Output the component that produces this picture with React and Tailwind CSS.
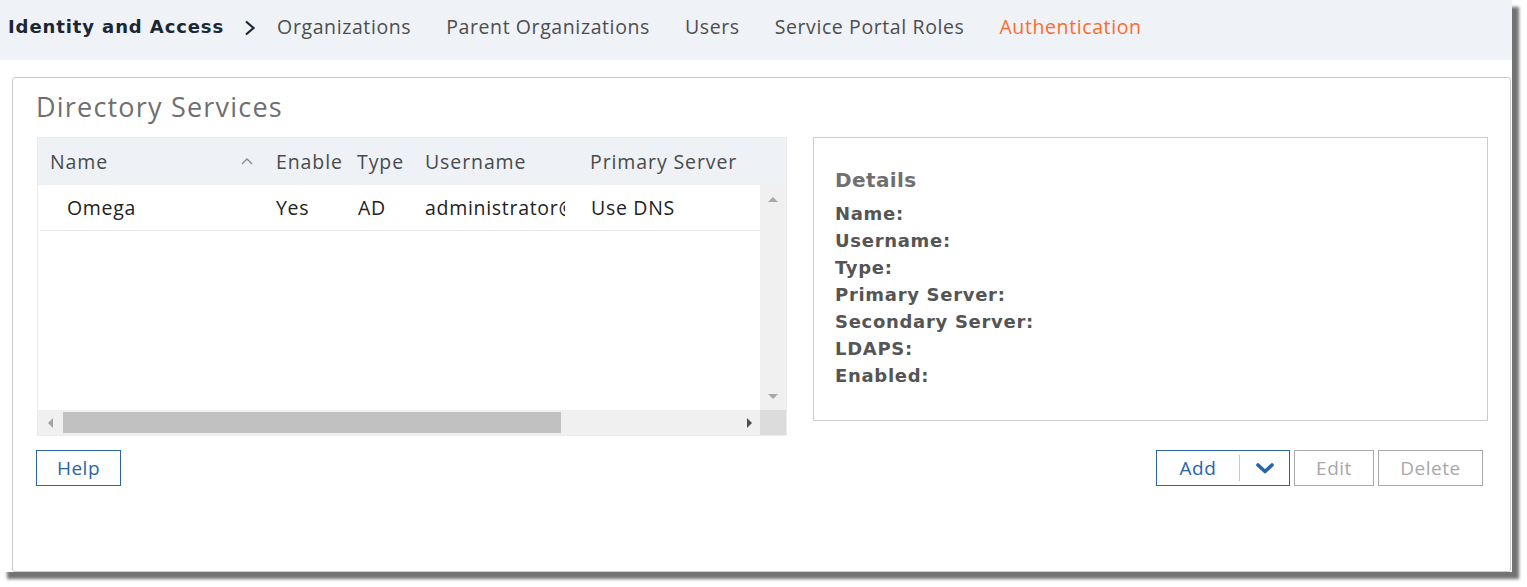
const tabs = ['Organizations', 'Parent Organizations', 'Users', 'Service Portal Roles']

const details = ['Name:', 'Username:', 'Type:', 'Primary Server:', 'Secondary Server:', 'LDAPS:', 'Enabled:']

const sans = "font-['Open_Sans',_'Noto_Sans',_sans-serif]"
const verdana = "font-['DejaVu_Sans',_'Liberation_Sans',_sans-serif]"

function Triangle({ dir, color }) {
  const pts = {
    up: '0,5 5,0 10,5',
    down: '0,0 10,0 5,5',
    left: '5,0 5,10 0,5',
    right: '0,0 0,10 5,5',
  }[dir]
  const vertical = dir === 'up' || dir === 'down'
  return (
    <svg width={vertical ? 10 : 5} height={vertical ? 5 : 10} viewBox={vertical ? '0 0 10 5' : '0 0 5 10'}>
      <polygon points={pts} fill={color} />
    </svg>
  )
}

export default function App() {
  return (
    <div className={`w-[1527px] h-[587px] bg-white ${sans}`}>
      <div className="w-[1512px] h-[572px] bg-white flex flex-col shadow-[7px_7px_3px_rgba(0,0,0,0.55)]">
        {/* top nav */}
        <div className="h-[60px] shrink-0 bg-[#eff3f7] flex items-center pl-[8px] pb-[7px]">
          <span className={`${verdana} font-bold text-[18px] text-[#1c2634] tracking-[0.9px]`}>Identity and Access</span>
          <svg width="12" height="16" viewBox="0 0 12 16" className="ml-[20px] mr-[21px] mt-[2px]">
            <polyline points="2,1.5 9.5,8 2,14.5" fill="none" stroke="#1c2634" strokeWidth="2.2" />
          </svg>
          <div className="flex items-center gap-[35px] text-[19.5px] tracking-[0.6px] text-[#4d4d4d]">
            {tabs.map(t => <span key={t}>{t}</span>)}
            <span className="text-[#ff6a2a]">Authentication</span>
          </div>
        </div>

        {/* card */}
        <div className="flex-1 mt-[17px] ml-[12px] mr-[1px] border border-[#cccccc] rounded-[3px] pl-[23px] pt-[11px]">
          <h1 className="text-[27px] tracking-[1.2px] text-[#6f6f6f] leading-[36px]">Directory Services</h1>

          <div className="flex mt-[12px] gap-[26px]">
            {/* table */}
            <div className="w-[750px] h-[299px] border border-[#ececec] flex flex-col ml-[1px]">
              <div className="h-[47px] bg-[#eef2f6] flex items-center text-[19.5px] tracking-[0.9px] text-[#4a4a4a]">
                <div className="w-[228px] pl-[12px] flex items-center justify-between pr-[13px]">
                  <span>Name</span>
                  <svg width="12" height="7" viewBox="0 0 12 7">
                    <polyline points="1,6 6,1 11,6" fill="none" stroke="#8a8a8a" strokeWidth="1.3" />
                  </svg>
                </div>
                <div className="w-[81px] pl-[10px]">Enable</div>
                <div className="w-[68px] pl-[10px]">Type</div>
                <div className="w-[165px] pl-[10px]">Username</div>
                <div className="pl-[10px] whitespace-nowrap">Primary Server</div>
              </div>
              <div className="flex-1 flex">
                <div className="w-[722px] pl-[2px]">
                  <div className="h-[46px] flex items-center text-[19.5px] tracking-[0.7px] text-[#222] border-b border-[#e8e8e8]">
                    <div className="w-[226px] pl-[27px]">Omega</div>
                    <div className="w-[81px] pl-[10px]">Yes</div>
                    <div className="w-[68px] pl-[11px]">AD</div>
                    <div className="w-[165px] pl-[10px]">
                      <div className="w-[140px] overflow-hidden whitespace-nowrap">administrator@</div>
                    </div>
                    <div className="pl-[11px]">Use DNS</div>
                  </div>
                </div>
                <div className="w-[26px] bg-[#f0f0f0] flex flex-col items-center justify-between pt-[12px] pb-[11px]">
                  <Triangle dir="up" color="#a8a8a8" />
                  <Triangle dir="down" color="#a8a8a8" />
                </div>
              </div>
              <div className="h-[25px] flex">
                <div className="w-[722px] bg-[#f0f0f0] flex items-center pl-[10px] pr-[8px] gap-[10px]">
                  <Triangle dir="left" color="#a3a3a3" />
                  <div className="w-[498px] h-[21px] bg-[#c1c1c1]" />
                  <div className="flex-1" />
                  <Triangle dir="right" color="#505050" />
                </div>
                <div className="w-[26px] bg-[#dcdcdc]" />
              </div>
            </div>

            {/* details */}
            <div className={`w-[675px] h-[284px] border border-[#cccccc] pl-[21px] pt-[27px] ${verdana} font-bold`}>
              <div className="text-[20px] tracking-[0.4px] text-[#707070] leading-[30px]">Details</div>
              <div className="text-[18px] tracking-[0.7px] text-[#555555] leading-[27px] mt-[5px]">
                {details.map(d => <div key={d}>{d}</div>)}
              </div>
            </div>
          </div>

          {/* buttons */}
          <div className="flex items-center mt-[14px] pr-[27px] text-[19px] tracking-[0.5px]">
            <button className="w-[85px] h-[36px] border border-[#2a64a6] text-[#2a64a6]">Help</button>
            <div className="flex-1" />
            <div className="w-[134px] h-[36px] border border-[#2a64a6] flex items-center text-[#2a64a6]">
              <span className="w-[82px] text-center">Add</span>
              <div className="w-px h-[26px] bg-[#c8c8c8]" />
              <div className="flex-1 flex justify-center">
                <svg width="18" height="11" viewBox="0 0 18 11">
                  <polyline points="2,2 9,8.5 16,2" fill="none" stroke="#2a64a6" strokeWidth="3.6" strokeLinecap="round" strokeLinejoin="round" />
                </svg>
              </div>
            </div>
            <button className="ml-[4px] w-[80px] h-[36px] border border-[#aaaaaa] text-[#a8a8a8]">Edit</button>
            <button className="ml-[4px] w-[105px] h-[36px] border border-[#aaaaaa] text-[#a8a8a8]">Delete</button>
          </div>
        </div>
      </div>
    </div>
  )
}
